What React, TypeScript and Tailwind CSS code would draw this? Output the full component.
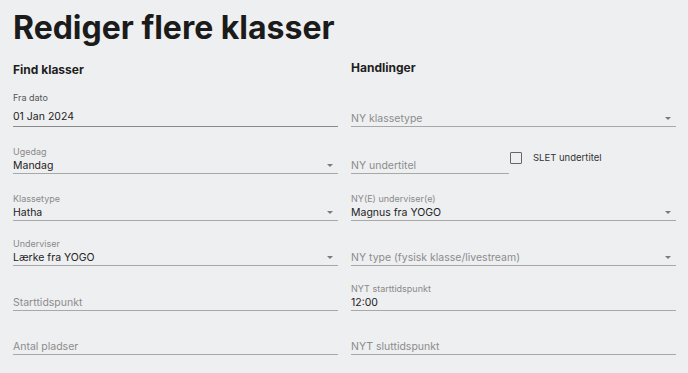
import React from "react";

const Arrow = () => (
  <svg width="6" height="3" viewBox="0 0 6 3" className="mr-[5px] shrink-0">
    <polygon points="0,0 6,0 3,3" fill="#7a7a7a" />
  </svg>
);

type FieldProps = {
  h: string;
  label?: string;
  value?: string;
  placeholder?: string;
  select?: boolean;
};

const Field = ({ h, label, value, placeholder, select }: FieldProps) => (
  <div className={`${h} flex flex-col justify-end`}>
    {label && (
      <div className="text-[9px] leading-[12px] text-[#8a8a8a]">{label}</div>
    )}
    <div className="flex items-center justify-between h-[15px] border-b border-[#a8a8a8] box-content">
      {value ? (
        <span className="text-[10.5px] leading-[15px] text-[#232323]">{value}</span>
      ) : (
        <span className="text-[10.5px] leading-[15px] text-[#8c8c8c]">{placeholder}</span>
      )}
      {select && <Arrow />}
    </div>
  </div>
);

export default function App() {
  return (
    <div
      className="w-[688px] h-[373px] bg-[#eeeff1] pl-[13px] pr-[12px] pt-[8px] overflow-hidden"
      style={{ fontFamily: "Inter, 'Liberation Sans', sans-serif" }}
    >
      <h1 className="text-[32px] leading-[40px] font-bold text-[#1b1b1b]">
        Rediger flere klasser
      </h1>
      <div className="grid grid-cols-2 gap-x-[13px] mt-[14px]">
        <div className="flex flex-col">
          <div className="text-[12px] leading-[16px] font-bold text-[#1e1e1e]">Find klasser</div>
          <div className="h-[49px] flex flex-col justify-end">
            <div className="text-[9px] leading-[12px] text-[#555]">Fra dato</div>
            <div className="mt-[5px] flex items-center h-[16px] pb-[1px] box-content border-b-[1.5px] border-[#8a8a8a]">
              <span className="text-[10.5px] leading-[16px] text-[#232323]">01 Jan 2024</span>
            </div>
          </div>
          <Field h="h-[47px]" label="Ugedag" value="Mandag" select />
          <Field h="h-[47px]" label="Klassetype" value="Hatha" select />
          <Field h="h-[45px]" label="Underviser" value="Lærke fra YOGO" select />
          <Field h="h-[45px]" placeholder="Starttidspunkt" />
          <Field h="h-[44px]" placeholder="Antal pladser" />
        </div>
        <div className="flex flex-col">
          <div className="text-[12px] leading-[16px] font-bold text-[#1e1e1e] -mt-[2px] mb-[2px]">Handlinger</div>
          <Field h="h-[49px]" placeholder="NY klassetype" select />
          <div className="h-[47px] flex">
            <div className="w-[158px]">
              <Field h="h-[47px]" placeholder="NY undertitel" />
            </div>
            <div className="flex items-center pt-[25px] self-start ml-[1px]">
              <div className="w-[12px] h-[12px] border-[1.5px] border-[#666] rounded-[1px]" />
              <span className="ml-[11px] text-[9.5px] leading-[12px] text-[#333]">SLET undertitel</span>
            </div>
          </div>
          <Field h="h-[47px]" label="NY(E) underviser(e)" value="Magnus fra YOGO" select />
          <Field h="h-[45px]" placeholder="NY type (fysisk klasse/livestream)" select />
          <Field h="h-[45px]" label="NYT starttidspunkt" value="12:00" />
          <Field h="h-[44px]" placeholder="NYT sluttidspunkt" />
        </div>
      </div>
    </div>
  );
}
